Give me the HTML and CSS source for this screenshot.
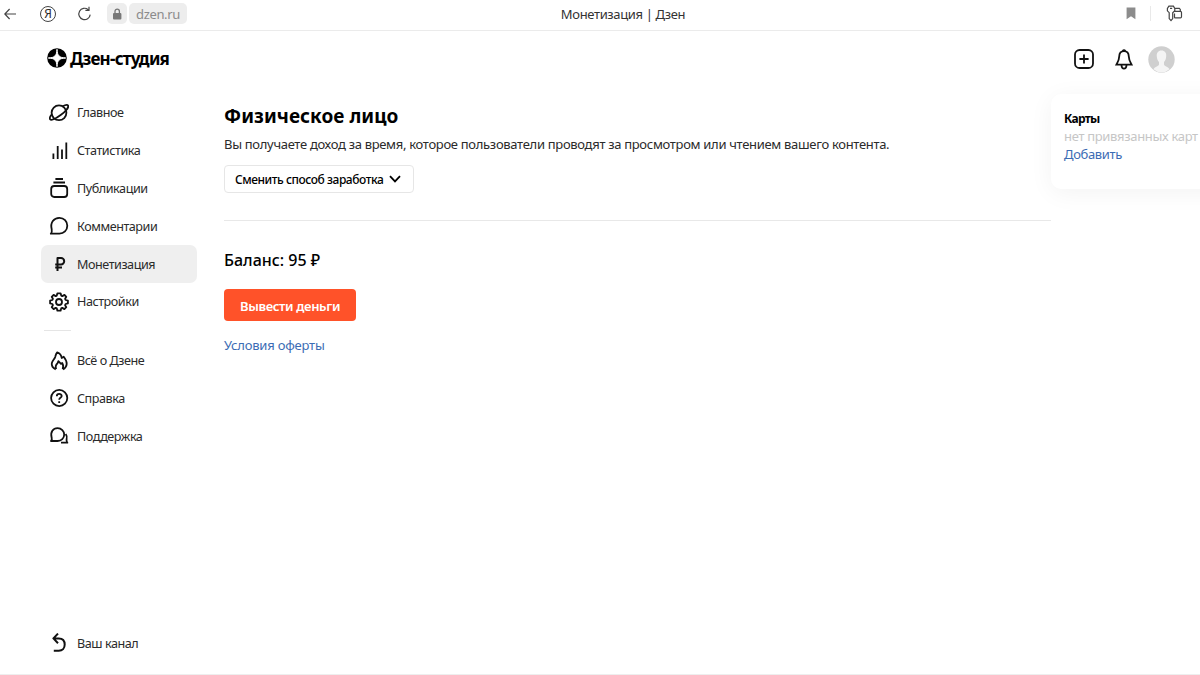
FILE: index.html
```
<!DOCTYPE html>
<html lang="ru">

<head>
  <meta charset="UTF-8">
  <meta name="viewport" content="width=device-width, initial-scale=1.0">
  <title>Монетизация | Дзен</title>
  <link rel="stylesheet" href="styles.css">
</head>

<body>
  <div class="browser-bar">
    <div class="bar-left">
      <svg class="bar-back" width="14" height="14" viewBox="0 0 14 14"><path d="M12 7H1M5.6 2L.8 7L5.6 12"/></svg>
      <div class="ya"><span>Я</span></div>
      <svg class="bar-reload" width="16" height="16" viewBox="0 0 16 16"><path d="M13.2 8.6A5.7 5.7 0 1 1 11.2 3.6M8.4 4.3H12V.7"/></svg>
      <div class="lock">
        <svg width="10" height="12" viewBox="0 0 10 12"><rect x="1" y="5" width="8.4" height="6.4" rx="1" fill="#777"/><path d="M3 5.5V3.3a2.2 2.2 0 0 1 4.4 0V5.5" stroke="#777" stroke-width="1.3"/></svg>
      </div>
      <div class="host"><span>dzen.ru</span></div>
    </div>
    <div class="bar-title"><span>Монетизация | Дзен</span></div>
    <div class="bar-right">
      <svg width="10" height="13" viewBox="0 0 10 13"><path d="M.6.5H9.4V12.3L5 9.2L.6 12.3Z" fill="#8c8c8c"/></svg>
      <div class="bar-sep"></div>
      <svg class="bar-keys" width="17" height="17" viewBox="0 0 17 17"><path d="M5.2 1.2H2.9L1.4 3.5V5.8L3.2 7.7V13.6L5 15.6L6.7 13.6V7.7L8.8 5.8V3.5L7.4 1.2ZM4 3.4H6.2M9.3 3.3H13.3L14.3 4.4V6.4H9M8.6 6.4H14.4Q15.5 6.4 15.5 7.5V11.8Q15.5 12.9 14.4 12.9H9.2Q8.5 12.9 8.5 11.9V8.6"/></svg>
    </div>
  </div>

  <header class="header">
    <div class="logo">
      <svg width="20" height="20" viewBox="0 0 20 20"><circle cx="10" cy="10" r="9.8" fill="#000"/><path d="M10 1.3C10.2 7.6 12.4 9.8 18.7 10C12.4 10.2 10.2 12.4 10 18.7C9.8 12.4 7.6 10.2 1.3 10C7.6 9.8 9.8 7.6 10 1.3Z" fill="#fff" stroke="#fff"/></svg>
      <span>Дзен-студия</span>
    </div>
    <div class="actions">
      <svg width="20" height="20" viewBox="0 0 20 20"><rect x="1" y="1" width="18" height="18" rx="4.6"/><path d="M10 5.4V14.6M5.4 10H14.6"/></svg>
      <svg class="bell" width="18" height="21" viewBox="0 0 18 21"><path d="M9 2.2C5.7 2.2 4.3 4.6 4.2 7.5C4.1 11.4 3.2 12.6 1.4 15.6H16.6C14.8 12.6 13.9 11.4 13.8 7.5C13.7 4.6 12.3 2.2 9 2.2ZM6.5 16.5C6.9 20.6 11.1 20.6 11.5 16.5M7.6 2Q9 .2 10.4 2"/></svg>
      <svg class="avatar" width="27" height="27" viewBox="0 0 27 27"><circle cx="13.5" cy="13.5" r="13.2" fill="#cfcfcf"/><path d="M13.5 4.5C10.2 4.5 8.4 7 8.8 10.5C9 13 9.8 14.8 11 16V18.5C11 20 7 20.5 5.5 23.2Q9 26.4 13.5 26.4T21.5 23.2C20 20.5 16 20 16 18.5V16C17.2 14.8 18 13 18.2 10.5C18.6 7 16.8 4.5 13.5 4.5Z" fill="#f4f4f4"/></svg>
    </div>
  </header>

  <div class="page">
    <nav class="sidebar">
      <a class="nav-item">
        <svg width="20" height="20" viewBox="0 0 20 20"><circle cx="10" cy="9.8" r="7.4"/><path d="M13.6 3.2C16.4 1.7 18.4 1.4 19 2.5C20 4.3 16.8 8.3 12 11.8S2.2 17.7 1.1 16.2C.4 15.2 1.2 13.2 3 11"/></svg>
        <span>Главное</span>
      </a>
      <a class="nav-item">
        <svg width="20" height="20" viewBox="0 0 20 20"><path d="M4.4 12.5V18M8.7 5V18M13 8.5V18M17.3 1.4V18"/></svg>
        <span>Статистика</span>
      </a>
      <a class="nav-item">
        <svg width="20" height="20" viewBox="0 0 20 20"><rect x="2.2" y="8" width="16" height="11" rx="3"/><path d="M4.4 4.5H16M6.4 1H14"/></svg>
        <span>Публикации</span>
      </a>
      <a class="nav-item">
        <svg width="20" height="20" viewBox="0 0 20 20"><path d="M1.8 17.7C3.2 16 3 14.7 2.7 13.2C1 6.5 4.8 1.8 10.4 1.8C15 1.8 18.3 5.4 18.3 9.8C18.3 14.4 14.8 17.7 10.4 17.7Z"/></svg>
        <span>Комментарии</span>
      </a>
      <a class="nav-item active">
        <svg class="ruble" width="20" height="20" viewBox="0 0 20 20"><path d="M8.5 17V4H12A3.2 3.2 0 0 1 12 10.4H6.2M6.2 13.6H13"/></svg>
        <span>Монетизация</span>
      </a>
      <a class="nav-item">
        <svg width="20" height="20" viewBox="0 0 20 20"><circle cx="10" cy="10" r="3"/><path d="M8.4 1.3H11.6L12.2 3.6L13.3 4.1L15.5 2.9L17.3 4.8L16.1 6.8L16.6 8L18.9 8.6V11.4L16.6 12L16.1 13.2L17.3 15.2L15.4 17.1L13.3 15.9L12.2 16.4L11.6 18.7H8.4L7.8 16.4L6.7 15.9L4.6 17.1L2.7 15.2L3.9 13.2L3.4 12L1.1 11.4V8.6L3.4 8L3.9 6.8L2.7 4.8L4.6 2.9L6.7 4.1L7.8 3.6Z"/></svg>
        <span>Настройки</span>
      </a>
      <div class="nav-line"></div>
      <a class="nav-item">
        <svg width="20" height="20" viewBox="0 0 20 20"><path d="M6.8 18.4C4.2 17.2 2.4 14.9 2.8 12.2C3.2 9.5 5.4 8.4 6.2 5.9C6.6 4.5 6.8 3 8.2 1.4C10.8 2.3 12.4 4.3 12.7 7L14.7 5.8C16.6 8.2 17.9 10.3 17.7 13C17.5 15.6 16.2 17.3 14.1 18.4M7.2 18.2C6 15.5 7 13.7 8.6 12.2L9.4 10.2L12 12.9L13.2 12C14.4 14.2 14.8 16.2 13.6 18.2"/></svg>
        <span>Всё о Дзене</span>
      </a>
      <a class="nav-item">
        <svg width="20" height="20" viewBox="0 0 20 20"><circle cx="10.2" cy="10" r="8.1"/><path d="M7.8 8.2C7.8 5.1 12.7 5.2 12.7 8C12.7 9.9 10.2 9.8 10.2 11.7M10.2 13.2V15"/></svg>
        <span>Справка</span>
      </a>
      <a class="nav-item">
        <svg width="20" height="20" viewBox="0 0 20 20"><path d="M2 15C3.2 13.8 3 12.6 2.6 11.4C1.2 6.1 4 2.2 8.6 2.2C12.4 2.2 15.2 5 15.2 8.6C15.2 12.3 12.4 15 8.6 15ZM16.7 8C18.1 9.8 18 11.6 17.6 13.2C17.3 14.6 17.4 15.4 18.4 16.7H12"/></svg>
        <span>Поддержка</span>
      </a>
      <a class="nav-item nav-bottom">
        <svg class="back-icon" width="20" height="20" viewBox="0 0 20 20"><path d="M9 .6L4.4 5.4L9 10.2M4.7 5.4H9.8C13.8 5.4 15.7 8.2 15.7 11.6C15.7 15.2 13.4 17.8 9.8 17.8H4.8"/></svg>
        <span>Ваш канал</span>
      </a>
    </nav>

    <main class="content">
      <h1 class="title"><span>Физическое лицо</span></h1>
      <p class="desc"><span>Вы получаете доход за время, которое пользователи проводят за просмотром или чтением вашего контента.</span></p>
      <button class="change-btn">
        <span>Сменить способ заработка</span>
        <svg width="12" height="8" viewBox="0 0 12 8"><path d="M1 1.2L6 6.4L11 1.2"/></svg>
      </button>
      <hr class="line">
      <h2 class="balance"><span>Баланс: 95 ₽</span></h2>
      <button class="pay-btn"><span>Вывести деньги</span></button>
      <a class="offer"><span>Условия оферты</span></a>
    </main>

    <aside class="cards">
      <b class="cards-title"><span>Карты</span></b>
      <span class="cards-empty">нет привязанных карт</span>
      <a class="cards-add"><span>Добавить</span></a>
    </aside>
  </div>
</body>

</html>
```

FILE: styles.css
```
* {
  box-sizing: border-box;
}

body {
  margin: 0;
  height: 675px;
  overflow: hidden;
  display: flex;
  flex-direction: column;
  background: #fff;
  color: #2b2b2b;
  font-family: "Noto Sans", "Open Sans", sans-serif;
  font-size: 13px;
  border-bottom: 1px solid #eee;
}

svg {
  display: block;
  flex: none;
  fill: none;
}

span {
  white-space: nowrap;
}

/* browser bar */
.browser-bar {
  display: grid;
  grid-template-columns: 1fr auto 1fr;
  align-items: center;
  height: 31px;
  padding: 0 17px 3px 4px;
  border-bottom: 1px solid #ebebeb;
  flex: none;
}

.bar-left,
.bar-right {
  display: flex;
  align-items: center;
}

.bar-right {
  justify-content: flex-end;
}

.bar-back,
.bar-reload,
.bar-keys {
  stroke: #444;
  stroke-width: 1.2;
}

.ya {
  width: 16px;
  height: 16px;
  margin: 0 21px 0 22px;
  border: 1px solid #444;
  border-radius: 50%;
  display: flex;
  align-items: center;
  justify-content: center;
  font-size: 12px;
  line-height: 14px;
}

.lock,
.host {
  height: 21px;
  background: #ededed;
  border-radius: 5px;
  display: flex;
  align-items: center;
  justify-content: center;
}

.lock {
  width: 20px;
  margin: 0 2px 0 14px;
}

.host {
  width: 58px;
  padding-top: 1px;
  color: #8b8b8b;
  letter-spacing: -0.35px;
}

.bar-title {
  color: #333;
  padding: 1px 0 0 59px;
  letter-spacing: -0.35px;
}

.bar-sep {
  width: 1px;
  height: 15px;
  margin: 0 15px 0 14px;
  background: #e9e9e9;
}

/* header */
.header {
  display: flex;
  justify-content: space-between;
  align-items: center;
  height: 56px;
  padding: 0 25px 0 47px;
  flex: none;
}

.logo {
  display: flex;
  align-items: center;
  gap: 3px;
  padding-bottom: 2px;
  color: #000;
  font-size: 17px;
  font-weight: 700;
  letter-spacing: -0.75px;
}

.actions {
  display: flex;
  align-items: center;
}

.actions svg {
  stroke: #111;
  stroke-width: 1.8;
}

.actions .bell {
  margin: 0 15px 0 21px;
}

.actions .avatar {
  stroke: none;
}

/* page */
.page {
  flex: 1;
  display: flex;
  align-items: flex-start;
  padding-left: 41px;
}

.sidebar {
  width: 156px;
  height: 587px;
  padding: 7px 0 12px;
  display: flex;
  flex-direction: column;
  flex: none;
}

.nav-item {
  display: flex;
  align-items: center;
  gap: 8px;
  height: 37.8px;
  padding-left: 8px;
  border-radius: 7px;
  font-size: 12.6px;
  letter-spacing: -0.45px;
  flex: none;
}

.nav-item svg {
  stroke: #111;
  stroke-width: 1.8;
  stroke-linejoin: round;
}

.nav-item svg.ruble,
.nav-item svg.back-icon {
  stroke-width: 2;
}

.nav-item.active {
  background: #efefef;
}

.nav-line {
  width: 27px;
  height: 1px;
  margin: 9px 0 11px 3px;
  background: #e5e5e5;
  flex: none;
}

.nav-bottom {
  margin-top: auto;
}

.content {
  width: 827px;
  margin-left: 27px;
  padding-top: 15px;
  display: flex;
  flex-direction: column;
  align-items: flex-start;
  flex: none;
}

.title {
  margin: 0;
  color: #000;
  font-size: 19px;
  line-height: 28px;
  letter-spacing: 0.05px;
}

.desc {
  margin: 4px 0 11px;
  line-height: 20px;
  letter-spacing: -0.31px;
}

.change-btn {
  display: flex;
  align-items: center;
  gap: 6px;
  width: 190px;
  height: 28px;
  padding: 0 0 0 10px;
  border: 1px solid #e6e6e6;
  border-radius: 4px;
  background: #fff;
  color: #000;
  font: 500 12px "Noto Sans", sans-serif;
  letter-spacing: -0.45px;
}

.change-btn svg {
  stroke: #000;
  stroke-width: 1.8;
}

.line {
  width: 100%;
  margin: 27px 0;
  border: 0;
  border-top: 1px solid #e8e8e8;
}

.balance {
  margin: 0;
  color: #000;
  font-size: 16px;
  font-weight: 500;
  line-height: 24px;
}

.pay-btn {
  width: 132px;
  height: 32px;
  margin: 17px 0 14px;
  padding: 1px 0 0;
  border: 0;
  border-radius: 4px;
  background: #ff5229;
  color: #fff;
  font: 600 13px "Noto Sans", sans-serif;
  letter-spacing: -0.35px;
}

.offer,
.cards-add {
  color: #3c6cb4;
  line-height: 20px;
  letter-spacing: -0.2px;
}

.cards {
  width: 180px;
  height: 95px;
  margin: 7px -31px 0 0;
  padding: 16px 0 0 13px;
  display: flex;
  flex-direction: column;
  border-radius: 10px;
  background: #fff;
  box-shadow: 0 4px 24px rgba(0, 0, 0, 0.05);
  flex: none;
}

.cards-title {
  color: #000;
  font-size: 12px;
  line-height: 18px;
  letter-spacing: -0.7px;
}

.cards-empty {
  color: #c6c6c6;
  line-height: 17px;
  letter-spacing: -0.32px;
}

.cards-add {
  line-height: 19px;
  letter-spacing: -0.35px;
}
```
